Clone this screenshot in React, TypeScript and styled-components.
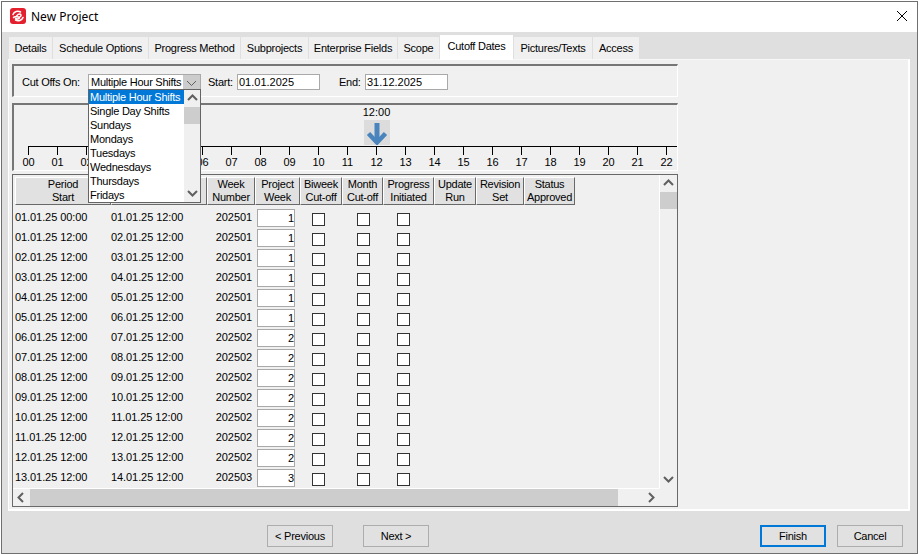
import React from 'react';
import styled, { createGlobalStyle } from 'styled-components';

const tabs = [
  { label: 'Details', width: 43 },
  { label: 'Schedule Options', width: 95 },
  { label: 'Progress Method', width: 91 },
  { label: 'Subprojects', width: 67 },
  { label: 'Enterprise Fields', width: 88 },
  { label: 'Scope', width: 41 },
  { label: 'Cutoff Dates', width: 73 },
  { label: 'Pictures/Texts', width: 78 },
  { label: 'Access', width: 46 },
];

const shifts = [
  'Multiple Hour Shifts',
  'Single Day Shifts',
  'Sundays',
  'Mondays',
  'Tuesdays',
  'Wednesdays',
  'Thursdays',
  'Fridays',
];

const columns = [
  ['Period', 'Start'],
  ['Period', 'End'],
  ['Week', 'Number'],
  ['Project', 'Week'],
  ['Biweek', 'Cut-off'],
  ['Month', 'Cut-off'],
  ['Progress', 'Initiated'],
  ['Update', 'Run'],
  ['Revision', 'Set'],
  ['Status', 'Approved'],
];

const hours = Array.from({ length: 23 }, (_, i) => String(i).padStart(2, '0'));

const dd = (n: number) => String(n).padStart(2, '0');

const rows = Array.from({ length: 14 }, (_, i) => {
  const startDay = i === 0 ? 1 : i;
  const endDay = i + 1;
  const week = i < 6 ? 1 : i < 13 ? 2 : 3;
  return {
    start: `${dd(startDay)}.01.25 ${i === 0 ? '00:00' : '12:00'}`,
    end: `${dd(endDay)}.01.25 12:00`,
    weekNumber: `20250${week}`,
    projectWeek: week,
  };
});

const Chevron = ({ dir, thin }: { dir: 'up' | 'down' | 'left' | 'right'; thin?: boolean }) => {
  const points = {
    up: '1,7 5.5,2.5 10,7',
    down: '1,3 5.5,7.5 10,3',
    left: '7,1 2.5,5.5 7,10',
    right: '3,1 7.5,5.5 3,10',
  }[dir];
  return (
    <svg width="11" height="11" viewBox="0 0 11 11">
      <polyline points={points} fill="none" stroke="#606060" strokeWidth={thin ? 1 : 2} />
    </svg>
  );
};

const App: React.FC = () => {
  return (
    <>
      <GlobalStyle />
      <Window>
        <TitleBar>
          <svg width="16" height="16" viewBox="0 0 16 16">
            <rect width="16" height="16" rx="3" fill="#e4202e" />
            <path
              d="M3 6.5C4 3.5 8 2.5 10.5 4M13 9.5C12 12.5 8 13.5 5.5 12M3.5 9.5C5.5 7 8 10.5 10.5 8.5C11.5 7.5 11 6 9.5 6C8 6 7 7.5 6.5 8M5.5 10.5C6.5 11 8.5 11 9.5 10"
              fill="none"
              stroke="#fff"
              strokeWidth="1.5"
              strokeLinecap="round"
            />
          </svg>
          <Title>New Project</Title>
          <CloseIcon width="10" height="10" viewBox="0 0 10 10">
            <path d="M0 0L10 10M10 0L0 10" stroke="#000" strokeWidth="1" />
          </CloseIcon>
        </TitleBar>
        <Body>
          <TabRow>
            {tabs.map((tab) => (
              <Tab key={tab.label} $width={tab.width} $active={tab.label === 'Cutoff Dates'}>
                {tab.label}
              </Tab>
            ))}
          </TabRow>
          <Panel>
            <FilterGroup>
              <FilterLabel>Cut Offs On:</FilterLabel>
              <ComboWrap>
                <Combo>
                  <ComboText>Multiple Hour Shifts</ComboText>
                  <ComboButton>
                    <Chevron dir="down" thin />
                  </ComboButton>
                </Combo>
                <DropList>
                  <DropItems>
                    {shifts.map((shift, i) => (
                      <DropItem key={shift} $selected={i === 0}>
                        {shift}
                      </DropItem>
                    ))}
                  </DropItems>
                  <DropScroll>
                    <ArrowCell>
                      <Chevron dir="up" />
                    </ArrowCell>
                    <DropThumb />
                    <ArrowCell $bottom>
                      <Chevron dir="down" />
                    </ArrowCell>
                  </DropScroll>
                </DropList>
              </ComboWrap>
              <StartLabel>Start:</StartLabel>
              <DateBox>01.01.2025</DateBox>
              <EndLabel>End:</EndLabel>
              <DateBox>31.12.2025</DateBox>
            </FilterGroup>
            <RulerGroup>
              <Marker $hour={12}>
                <MarkerTime>12:00</MarkerTime>
                <MarkerBox>
                  <svg width="22" height="24" viewBox="0 0 22 24">
                    <path d="M11 2V21" stroke="#4a84bd" strokeWidth="5" />
                    <path d="M2.5 12.5L11 21.5L19.5 12.5" fill="none" stroke="#4a84bd" strokeWidth="4.5" />
                  </svg>
                </MarkerBox>
              </Marker>
              <Axis />
              <Ticks>
                {hours.map((h) => (
                  <TickCol key={h}>
                    <TickLine />
                    <TickLabel>{h}</TickLabel>
                  </TickCol>
                ))}
              </Ticks>
            </RulerGroup>
            <GridFrame>
              <GridMain>
                <GridContent>
                  <HeaderRow>
                    {columns.map(([a, b]) => (
                      <HeaderCell key={a + b}>
                        {a}
                        <br />
                        {b}
                      </HeaderCell>
                    ))}
                  </HeaderRow>
                  {rows.map((row) => (
                    <DataRow key={row.start}>
                      <span>{row.start}</span>
                      <span>{row.end}</span>
                      <WeekNumber>{row.weekNumber}</WeekNumber>
                      <WeekCell>
                        <WeekInput>{row.projectWeek}</WeekInput>
                      </WeekCell>
                      <CheckCell $indent={12}>
                        <CheckBox />
                      </CheckCell>
                      <CheckCell $indent={15}>
                        <CheckBox />
                      </CheckCell>
                      <CheckCell $indent={14}>
                        <CheckBox />
                      </CheckCell>
                    </DataRow>
                  ))}
                </GridContent>
                <VScroll>
                  <VArrow>
                    <Chevron dir="up" />
                  </VArrow>
                  <VThumb />
                  <VArrow $bottom>
                    <Chevron dir="down" />
                  </VArrow>
                </VScroll>
              </GridMain>
              <HScroll>
                <HArrow>
                  <Chevron dir="left" />
                </HArrow>
                <HThumb />
                <HArrow $end>
                  <Chevron dir="right" />
                </HArrow>
              </HScroll>
            </GridFrame>
          </Panel>
          <Footer>
            <FooterButton $left={259}>&lt; Previous</FooterButton>
            <FooterButton $left={30}>Next &gt;</FooterButton>
            <Spacer />
            <FooterButton $primary>Finish</FooterButton>
            <FooterButton $left={11}>Cancel</FooterButton>
          </Footer>
        </Body>
      </Window>
    </>
  );
};
export default App;

const GlobalStyle = createGlobalStyle`
  html, body {
    margin: 0;
    width: 919px;
    height: 555px;
    overflow: hidden;
    background: #fff;
  }
  * {
    box-sizing: border-box;
  }
  #root {
    padding: 1px;
    font-family: "Liberation Sans", Arial, sans-serif;
    font-size: 11px;
    line-height: 13px;
    letter-spacing: -0.25px;
    color: #000;
  }
`;

const Window = styled.div`
  width: 917px;
  height: 553px;
  border: solid 1px #6f6f6f;
  display: flex;
  flex-direction: column;
`;
const TitleBar = styled.div`
  height: 30px;
  flex: none;
  background-color: #fff;
  padding: 0 10px 2px 8px;
  display: flex;
  align-items: center;
`;
const Title = styled.div`
  margin-left: 5px;
  font-family: "Noto Sans", sans-serif;
  font-size: 12px;
  letter-spacing: 0;
`;
const CloseIcon = styled.svg`
  margin-left: auto;
`;
const Body = styled.div`
  flex: 1;
  background-color: #dfdfdf;
  padding: 3px 0 0 6px;
  display: flex;
  flex-direction: column;
`;
const TabRow = styled.div`
  height: 24px;
  flex: none;
  margin-left: 1px;
  display: flex;
  align-items: flex-end;
  gap: 1px;
  position: relative;
  z-index: 1;
`;
const Tab = styled.div<{ $active?: boolean; $width: number }>`
  width: ${(p) => p.$width}px;
  height: ${(p) => (p.$active ? '25px' : '22px')};
  margin-bottom: ${(p) => (p.$active ? '-1px' : '0')};
  padding-top: 5px;
  text-align: center;
  background-color: ${(p) => (p.$active ? '#fff' : '#f0f0f0')};
  white-space: nowrap;
`;
const Panel = styled.div`
  width: 902px;
  height: 452px;
  flex: none;
  background-color: #f0f0f0;
  border-top: solid 1px #f7f7f7;
  border-left: solid 1px #fff;
  border-right: solid 2px #fff;
  border-bottom: solid 2px #fff;
  padding: 4px 0 0 3px;
`;
const FilterGroup = styled.div`
  width: 666px;
  height: 33px;
  border-top: solid 2px #767676;
  border-left: solid 2px #767676;
  border-right: solid 1px #fff;
  border-bottom: solid 1px #fff;
  padding: 8px 0 0 8px;
  display: flex;
  align-items: flex-start;
`;
const FilterLabel = styled.div`
  width: 66px;
  line-height: 16px;
  white-space: nowrap;
`;
const ComboWrap = styled.div`
  width: 113px;
  position: relative;
`;
const Combo = styled.div`
  height: 16px;
  border: solid 1px #a9a9a9;
  background-color: #fff;
  display: flex;
`;
const ComboText = styled.div`
  flex: 1;
  padding-left: 2px;
  line-height: 14px;
  white-space: nowrap;
`;
const ComboButton = styled.div`
  width: 17px;
  padding-top: 3px;
  background-color: #cccccc;
  display: flex;
  align-items: center;
  justify-content: center;
`;
const DropList = styled.div`
  position: absolute;
  left: 0;
  top: 15px;
  width: 113px;
  height: 114px;
  border: solid 1px #646464;
  background-color: #fff;
  display: flex;
  z-index: 2;
`;
const DropItems = styled.div`
  width: 95px;
`;
const DropItem = styled.div<{ $selected?: boolean }>`
  height: 14px;
  padding-left: 1px;
  line-height: 14px;
  white-space: nowrap;
  background-color: ${(p) => (p.$selected ? '#0078d7' : 'transparent')};
  color: ${(p) => (p.$selected ? '#fff' : '#000')};
`;
const DropScroll = styled.div`
  width: 16px;
  background-color: #f0f0f0;
  display: flex;
  flex-direction: column;
`;
const ArrowCell = styled.div<{ $bottom?: boolean }>`
  height: 17px;
  margin-top: ${(p) => (p.$bottom ? 'auto' : '0')};
  display: flex;
  align-items: center;
  justify-content: center;
`;
const DropThumb = styled.div`
  height: 17px;
  background-color: #cdcdcd;
`;
const StartLabel = styled.div`
  width: 29px;
  margin-left: 7px;
  line-height: 16px;
`;
const EndLabel = styled.div`
  width: 26px;
  margin-left: 19px;
  line-height: 16px;
`;
const DateBox = styled.div`
  width: 83px;
  height: 16px;
  border: solid 1px #a9a9a9;
  background-color: #fff;
  padding-left: 1px;
  line-height: 14px;
  letter-spacing: 0;
`;
const RulerGroup = styled.div`
  width: 666px;
  height: 68px;
  margin-top: 6px;
  border-top: solid 2px #767676;
  border-left: solid 2px #767676;
  border-right: solid 1px #fff;
  border-bottom: solid 1px #fff;
  overflow: hidden;
`;
const Marker = styled.div<{ $hour: number }>`
  width: 29px;
  height: 40px;
  padding-top: 1px;
  margin-left: ${(p) => p.$hour * 29}px;
  display: flex;
  flex-direction: column;
  align-items: center;
  white-space: nowrap;
  letter-spacing: 0;
`;
const MarkerTime = styled.div`
  height: 14px;
`;
const MarkerBox = styled.div`
  width: 26px;
  height: 25px;
  background-color: #dcdcdc;
  display: flex;
  align-items: center;
  justify-content: center;
`;
const Axis = styled.div`
  margin: 1px 0 0 14px;
  height: 1px;
  background-color: #000;
`;
const Ticks = styled.div`
  display: flex;
  width: 667px;
  letter-spacing: 0;
`;
const TickCol = styled.div`
  width: 29px;
  flex: none;
  display: flex;
  flex-direction: column;
  align-items: center;
`;
const TickLine = styled.div`
  width: 1px;
  height: 8px;
  background-color: #000;
`;
const TickLabel = styled.div`
  margin-top: 1px;
`;
const GridFrame = styled.div`
  width: 666px;
  height: 333px;
  margin-top: 3px;
  border: solid 1px #696969;
  display: flex;
  flex-direction: column;
`;
const GridMain = styled.div`
  height: 314px;
  flex: none;
  display: flex;
`;
const GridContent = styled.div`
  width: 647px;
  border-bottom: solid 1px #fff;
  padding: 2px 0 0 2px;
`;
const gridColumns = '96px 96px 48px 45px 42px 41px 51px 42px 48px 51px';
const HeaderRow = styled.div`
  width: 560px;
  height: 28px;
  margin-bottom: 2px;
  display: grid;
  grid-template-columns: ${gridColumns};
`;
const HeaderCell = styled.div`
  background-color: #e1e1e1;
  border-top: solid 1px #fff;
  border-left: solid 1px #fff;
  border-right: solid 1px #696969;
  border-bottom: solid 1px #696969;
  text-align: center;
  white-space: nowrap;
`;
const DataRow = styled.div`
  height: 20px;
  display: grid;
  grid-template-columns: ${gridColumns};
  line-height: 20px;
  white-space: nowrap;
  letter-spacing: -0.08px;
`;
const WeekNumber = styled.span`
  text-align: right;
  padding-right: 3px;
`;
const WeekCell = styled.div`
  padding: 2px 0 0 2px;
`;
const WeekInput = styled.div`
  width: 38px;
  height: 18px;
  border: solid 1px #a9a9a9;
  background-color: #fff;
  text-align: right;
  line-height: 16px;
`;
const CheckCell = styled.div<{ $indent: number }>`
  padding: 6px 0 0 ${(p) => p.$indent}px;
`;
const CheckBox = styled.div`
  width: 13px;
  height: 13px;
  border: solid 1px #333;
  background-color: #fff;
`;
const VScroll = styled.div`
  width: 18px;
  border-left: solid 1px #fff;
  border-bottom: solid 1px #f0f0f0;
  display: flex;
  flex-direction: column;
`;
const VArrow = styled.div<{ $bottom?: boolean }>`
  height: 17px;
  margin-top: ${(p) => (p.$bottom ? 'auto' : '0')};
  display: flex;
  align-items: center;
  justify-content: center;
`;
const VThumb = styled.div`
  height: 17px;
  background-color: #cdcdcd;
`;
const HScroll = styled.div`
  flex: 1;
  display: flex;
  width: 647px;
`;
const HArrow = styled.div<{ $end?: boolean }>`
  width: 17px;
  margin-left: ${(p) => (p.$end ? 'auto' : '0')};
  display: flex;
  align-items: center;
  justify-content: center;
`;
const HThumb = styled.div`
  width: 588px;
  background-color: #cdcdcd;
`;
const Footer = styled.div`
  flex: 1;
  padding: 14px 14px 0 0;
  display: flex;
  align-items: flex-start;
`;
const Spacer = styled.div`
  flex: 1;
`;
const FooterButton = styled.div<{ $primary?: boolean; $left?: number }>`
  width: 66px;
  height: 22px;
  margin-left: ${(p) => p.$left || 0}px;
  border: ${(p) => (p.$primary ? 'solid 2px #0078d7' : 'solid 1px #adadad')};
  background-color: #e1e1e1;
  display: flex;
  align-items: center;
  justify-content: center;
`;
